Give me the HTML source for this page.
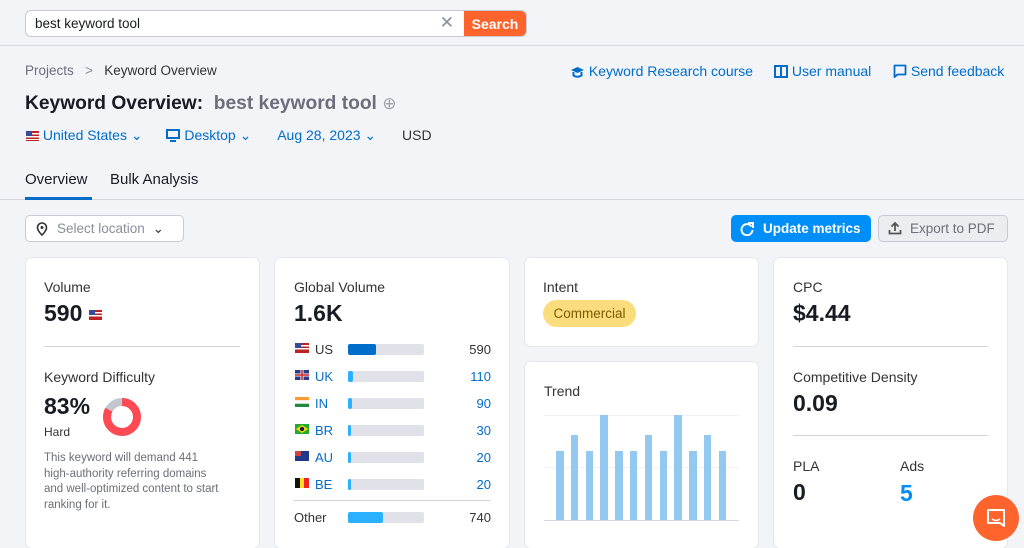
<!DOCTYPE html>
<html><head><meta charset="utf-8"><style>
*{box-sizing:border-box;margin:0;padding:0}
body{width:1024px;height:541px;overflow:hidden;background:#f3f4f8;font-family:"Liberation Sans",sans-serif;color:#191b23;position:relative}
.abs{position:absolute}
.topbar{left:0;top:0;width:1024px;height:46px;border-bottom:1px solid #d6d8e0;background:#f3f4f8}
.search{left:25px;top:10px;width:502px;height:27px;border:1px solid #c8cad3;border-radius:6px;background:#fff;overflow:hidden}
.search span{position:absolute;left:9px;top:5px;font-size:13.5px;color:#191b23}
.sbtn{position:absolute;right:0;top:0;width:62px;height:27px;background:#ff642d;color:#fff;font-size:14px;font-weight:bold;text-align:center;line-height:26px}
.x{position:absolute;right:72px;top:2px;color:#8a8e9b;font-size:17px}
.card{background:#fff;border-radius:6px;box-shadow:0 0 0 1px #e6e7ec}
.lbl{font-size:14px;color:#333}
.big{font-size:23px;font-weight:bold;color:#191b23}
.hr{height:1px;background:#d0d2dc}
.row{position:absolute;left:20px;width:196px;height:14px;font-size:13px}
.row .c{position:absolute;left:20px;top:-1px;color:#006dca}
.row .bar{position:absolute;left:53px;top:1px;width:76px;height:11px;background:#e0e1e9;border-radius:2px}
.row .bar i{display:block;height:11px;background:#2bb0ff;border-radius:2px}
.row .v{position:absolute;right:0;top:-1px;color:#006dca}
.flag{position:absolute;left:0;top:0;width:14px;height:10px}
.lnk{position:absolute;top:63px;font-size:14px;color:#006dca;white-space:nowrap}
</style></head><body>
<div class="abs topbar"></div>
<div class="abs search"><span>best keyword tool</span><div class="x">✕</div><div class="sbtn">Search</div></div>

<div class="abs" style="left:25px;top:63px;font-size:13.5px;color:#6c6e79">Projects&nbsp;&nbsp;&nbsp;<span style="color:#8a8e9b">&gt;</span>&nbsp;&nbsp;&nbsp;<span style="color:#333">Keyword Overview</span></div>
<div class="abs" style="left:25px;top:93px;font-size:19.2px;font-weight:bold;color:#191b23">Keyword Overview:&nbsp; <span style="color:#6c6e79">best keyword tool</span> <span style="color:#a0a3ad;font-weight:normal;font-size:17px">⊕</span></div>
<div class="abs" style="left:26px;top:127px;font-size:14px;color:#006dca;white-space:nowrap">
<svg width="13" height="10" style="vertical-align:-1px"><rect width="13" height="10" fill="#b22"/><rect y="2" width="13" height="1.5" fill="#fff"/><rect y="5" width="13" height="1.5" fill="#fff"/><rect y="8" width="13" height="1" fill="#fff"/><rect width="6" height="5" fill="#3a4a9a"/></svg> United States ⌄
<span style="margin-left:20px"><svg width="14" height="13" style="vertical-align:-2px"><rect x="1" y="1" width="12" height="8" fill="none" stroke="#006dca" stroke-width="2"/><rect x="4" y="11" width="6" height="2" fill="#006dca"/></svg> Desktop ⌄</span>
<span style="margin-left:22px">Aug 28, 2023 ⌄</span>
<span style="margin-left:22px;color:#333">USD</span></div>

<div class="lnk" style="left:570px"><svg width="15" height="13" style="vertical-align:-2px"><path d="M1 5l6.5-3L14 5l-6.5 3z" fill="#006dca"/><path d="M3.5 7v3.5q4 2.5 8 0V7" fill="none" stroke="#006dca" stroke-width="2"/></svg> Keyword Research course</div>
<div class="lnk" style="left:774px"><svg width="14" height="13" style="vertical-align:-2px"><rect x="1" y="1" width="12" height="11" fill="none" stroke="#006dca" stroke-width="2"/><path d="M7 1v11" stroke="#006dca" stroke-width="2"/></svg> User manual</div>
<div class="lnk" style="left:893px"><svg width="14" height="14" style="vertical-align:-2px"><path d="M1.5 1.5h11v9h-8l-3 2.5z" fill="none" stroke="#006dca" stroke-width="1.8" stroke-linejoin="round"/></svg> Send feedback</div>

<div class="abs" style="left:25px;top:171px;font-size:15px;color:#191b23">Overview</div>
<div class="abs" style="left:110px;top:171px;font-size:15px;color:#191b23">Bulk Analysis</div>
<div class="abs" style="left:0;top:199px;width:1024px;height:1px;background:#d6d8e0"></div>
<div class="abs" style="left:25px;top:197px;width:67px;height:3px;background:#006dca"></div>

<div class="abs" style="left:25px;top:215px;width:159px;height:27px;border:1px solid #c8cad3;border-radius:5px;background:#fff;font-size:13.5px;color:#8a8e9b;padding:5px 0 0 31px">Select location <span style="color:#333;margin-left:4px">⌄</span>
<svg class="abs" style="left:10px;top:6px" width="12" height="14"><path d="M6 1a4.5 4.5 0 0 1 4.5 4.5C10.5 9 6 13 6 13S1.5 9 1.5 5.5A4.5 4.5 0 0 1 6 1z" fill="none" stroke="#333" stroke-width="1.6"/><circle cx="6" cy="5.5" r="1.5" fill="#333"/></svg></div>
<div class="abs" style="left:731px;top:215px;width:140px;height:27px;background:#008ff8;border-radius:5px;color:#fff;font-size:13.5px;font-weight:bold;padding:6px 0 0 32px">Update metrics<svg class="abs" style="left:9px;top:7px" width="14" height="14"><path d="M11.5 4.5A5.5 5.5 0 1 0 12.5 8" fill="none" stroke="#fff" stroke-width="2"/><path d="M8 1h5v5" fill="none" stroke="#fff" stroke-width="2"/></svg></div>
<div class="abs" style="left:878px;top:215px;width:130px;height:27px;background:#ecedf1;border:1px solid #c8cad3;border-radius:5px;color:#6c6e79;font-size:13.5px;padding:5px 0 0 31px">Export to PDF<svg class="abs" style="left:9px;top:5px" width="14" height="14"><path d="M7 10V2M3.5 5.5L7 2l3.5 3.5M1.5 9v3.5h11V9" fill="none" stroke="#555" stroke-width="1.8"/></svg></div>

<div class="abs card" style="left:26px;top:258px;width:233px;height:290px">
<div class="abs lbl" style="left:18px;top:21px">Volume</div>
<div class="abs big" style="left:18px;top:42px">590 <svg width="13" height="10" style="vertical-align:1px"><rect width="13" height="10" fill="#b22"/><rect y="2" width="13" height="1.5" fill="#fff"/><rect y="5" width="13" height="1.5" fill="#fff"/><rect width="6" height="5" fill="#3a4a9a"/></svg></div>
<div class="abs hr" style="left:18px;top:88px;width:196px"></div>
<div class="abs lbl" style="left:18px;top:111px">Keyword Difficulty</div>
<div class="abs big" style="left:18px;top:135px">83%</div>
<div class="abs" style="left:18px;top:167px;font-size:12px;color:#333">Hard</div>
<svg class="abs" style="left:75px;top:138px" width="42" height="42"><circle cx="21" cy="21" r="15" fill="none" stroke="#c4c6cf" stroke-width="8"/><circle cx="21" cy="21" r="15" fill="none" stroke="#ff4953" stroke-width="8" stroke-dasharray="78.2 94.2" transform="rotate(-90 21 21)"/></svg>
<div class="abs" style="left:18px;top:193px;white-space:nowrap;font-size:11.5px;line-height:15.6px;color:#6c6e79">This keyword will demand 441<br>high-authority referring domains<br>and well-optimized content to start<br>ranking for it.</div>
</div>

<div class="abs card" style="left:275px;top:258px;width:234px;height:290px">
<div class="abs lbl" style="left:19px;top:21px">Global Volume</div>
<div class="abs big" style="left:19px;top:42px">1.6K</div>
<div class="row" style="top:85px"><svg class="flag"><rect width="14" height="10" fill="#b22"/><rect y="2" width="14" height="1.5" fill="#fff"/><rect y="5" width="14" height="1.5" fill="#fff"/><rect width="6" height="5" fill="#3a4a9a"/></svg><span class="c" style="color:#333">US</span><div class="bar"><i style="width:28px;background:#006dca"></i></div><span class="v" style="color:#333">590</span></div>
<div class="row" style="top:112px"><svg class="flag"><rect width="14" height="10" fill="#2a3a8a"/><path d="M0 5h14M7 0v10" stroke="#fff" stroke-width="3"/><path d="M0 5h14M7 0v10" stroke="#c22" stroke-width="1.5"/></svg><span class="c">UK</span><div class="bar"><i style="width:5px"></i></div><span class="v">110</span></div>
<div class="row" style="top:139px"><svg class="flag"><rect width="14" height="3.3" fill="#f93"/><rect y="3.3" width="14" height="3.4" fill="#fff"/><rect y="6.7" width="14" height="3.3" fill="#284"/></svg><span class="c">IN</span><div class="bar"><i style="width:4px"></i></div><span class="v">90</span></div>
<div class="row" style="top:166px"><svg class="flag"><rect width="14" height="10" fill="#2a3"/><path d="M7 1L13 5 7 9 1 5z" fill="#fd0"/><circle cx="7" cy="5" r="2.2" fill="#124"/></svg><span class="c">BR</span><div class="bar"><i style="width:3px"></i></div><span class="v">30</span></div>
<div class="row" style="top:193px"><svg class="flag"><rect width="14" height="10" fill="#233a8a"/><rect width="6" height="5" fill="#c44"/></svg><span class="c">AU</span><div class="bar"><i style="width:3px"></i></div><span class="v">20</span></div>
<div class="row" style="top:220px"><svg class="flag"><rect width="5" height="10" fill="#111"/><rect x="5" width="4" height="10" fill="#fd2"/><rect x="9" width="5" height="10" fill="#e22"/></svg><span class="c">BE</span><div class="bar"><i style="width:3px"></i></div><span class="v">20</span></div>
<div class="abs hr" style="left:19px;top:242px;width:196px"></div>
<div class="row" style="top:253px"><span style="position:absolute;left:-1px;top:-1px;color:#333">Other</span><div class="bar"><i style="width:35px"></i></div><span class="v" style="color:#333">740</span></div>
</div>

<div class="abs card" style="left:525px;top:258px;width:233px;height:88px">
<div class="abs lbl" style="left:18px;top:21px">Intent</div>
<div class="abs" style="left:18px;top:42px;width:93px;height:27px;border-radius:14px;background:#fcdd7e;font-size:13.5px;color:#7a5b00;text-align:center;line-height:27px">Commercial</div>
</div>
<div class="abs card" style="left:525px;top:362px;width:233px;height:186px">
<div class="abs lbl" style="left:19px;top:21px">Trend</div>
<div class="abs" style="left:19px;top:53px;width:195px;height:1px;background:#f0f1f4"></div>
<div class="abs" style="left:19px;top:105px;width:195px;height:1px;background:#f0f1f4"></div>
<div class="abs" style="left:19px;top:158px;width:195px;height:1px;background:#d6d8e0"></div>
<div class="abs" style="left:31px;top:53px;width:180px;height:105px;display:flex;align-items:flex-end;gap:7.3px">
<i style="width:7.5px;height:69px;background:#93c8f0"></i><i style="width:7.5px;height:85px;background:#93c8f0"></i><i style="width:7.5px;height:69px;background:#93c8f0"></i><i style="width:7.5px;height:105px;background:#93c8f0"></i><i style="width:7.5px;height:69px;background:#93c8f0"></i><i style="width:7.5px;height:69px;background:#93c8f0"></i><i style="width:7.5px;height:85px;background:#93c8f0"></i><i style="width:7.5px;height:69px;background:#93c8f0"></i><i style="width:7.5px;height:105px;background:#93c8f0"></i><i style="width:7.5px;height:69px;background:#93c8f0"></i><i style="width:7.5px;height:85px;background:#93c8f0"></i><i style="width:7.5px;height:69px;background:#93c8f0"></i>
</div>
</div>

<div class="abs card" style="left:774px;top:258px;width:233px;height:290px">
<div class="abs lbl" style="left:19px;top:21px">CPC</div>
<div class="abs big" style="left:19px;top:42px">$4.44</div>
<div class="abs hr" style="left:19px;top:88px;width:195px"></div>
<div class="abs lbl" style="left:19px;top:111px">Competitive Density</div>
<div class="abs big" style="left:19px;top:132px">0.09</div>
<div class="abs hr" style="left:19px;top:177px;width:195px"></div>
<div class="abs lbl" style="left:19px;top:200px">PLA</div>
<div class="abs big" style="left:19px;top:221px">0</div>
<div class="abs lbl" style="left:126px;top:200px">Ads</div>
<div class="abs big" style="left:126px;top:222px;color:#008ff8">5</div>
</div>

<div class="abs" style="left:973px;top:495px;width:46px;height:46px;border-radius:50%;background:#ff642d"></div>
<svg class="abs" style="left:985px;top:507px" width="22" height="22"><path d="M3 3h16v16l-4-3H3z" fill="none" stroke="#fff" stroke-width="2" stroke-linejoin="round"/><path d="M7 12q4 3 8 0" fill="none" stroke="#fff" stroke-width="1.6"/></svg>
</body></html>
